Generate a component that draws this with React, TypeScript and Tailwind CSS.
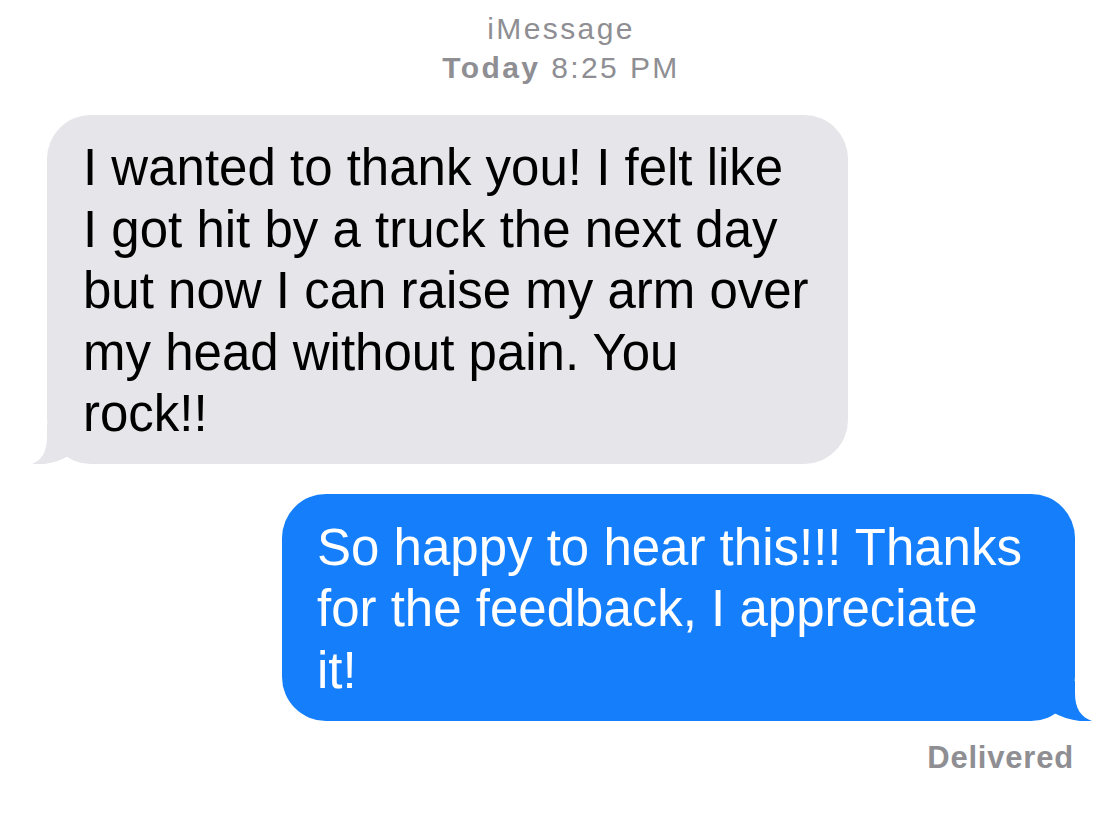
const gray = "#e5e5ea";
const blue = "#147efb";

function LeftTail() {
  return (
    <svg
      className="absolute left-[-16px] bottom-0"
      width="56"
      height="40"
      viewBox="0 0 56 40"
    >
      <path
        d="M16 0 L16 12 C16 28 11 36 1 40 C14 41.5 28 38 39 31 L42 0 Z"
        fill={gray}
      />
    </svg>
  );
}

function RightTail() {
  return (
    <svg
      className="absolute right-[-18px] bottom-0"
      width="58"
      height="40"
      viewBox="0 0 58 40"
    >
      <path
        d="M40 0 L40 12 C40 28 46 36 57 40 C44 41.5 30 38 17 31 L14 0 Z"
        fill={blue}
      />
    </svg>
  );
}

const received = [
  "I wanted to thank you! I felt like",
  "I got hit by a truck the next day",
  "but now I can raise my arm over",
  "my head without pain. You",
  "rock!!",
];

const sent = [
  "So happy to hear this!!! Thanks",
  "for the feedback, I appreciate",
  "it!",
];

export default function App() {
  return (
    <div className="min-h-screen bg-white font-['Liberation_Sans',Arial,sans-serif] flex flex-col">
      {/* header */}
      <div className="flex flex-col items-center pl-[26px] pt-[9px] text-[30px] leading-[39px] tracking-[2.4px] text-[#8e8e93]">
        <div>iMessage</div>
        <div>
          <span className="font-bold">Today</span> 8:25 PM
        </div>
      </div>

      {/* incoming */}
      <div className="relative mt-[28px] ml-[47px] w-[801px]">
        <LeftTail />
        <div className="relative rounded-[44px] bg-[#e5e5ea] pt-[22px] pb-[19px] pl-[36px] text-[51px] leading-[61.5px] text-black whitespace-nowrap">
          {received.map((line) => (
            <div key={line}>{line}</div>
          ))}
        </div>
      </div>

      {/* outgoing */}
      <div className="relative mt-[30px] mr-[21px] self-end w-[793px]">
        <RightTail />
        <div className="relative rounded-[44px] bg-[#147efb] pt-[23px] pb-[20px] pl-[35px] text-[51px] leading-[61.5px] text-white whitespace-nowrap">
          {sent.map((line) => (
            <div key={line}>{line}</div>
          ))}
        </div>
      </div>

      <div className="self-end mr-[22px] mt-[19px] text-[31px] leading-[36px] font-bold tracking-[0.8px] text-[#8e8e93]">
        Delivered
      </div>
    </div>
  );
}
